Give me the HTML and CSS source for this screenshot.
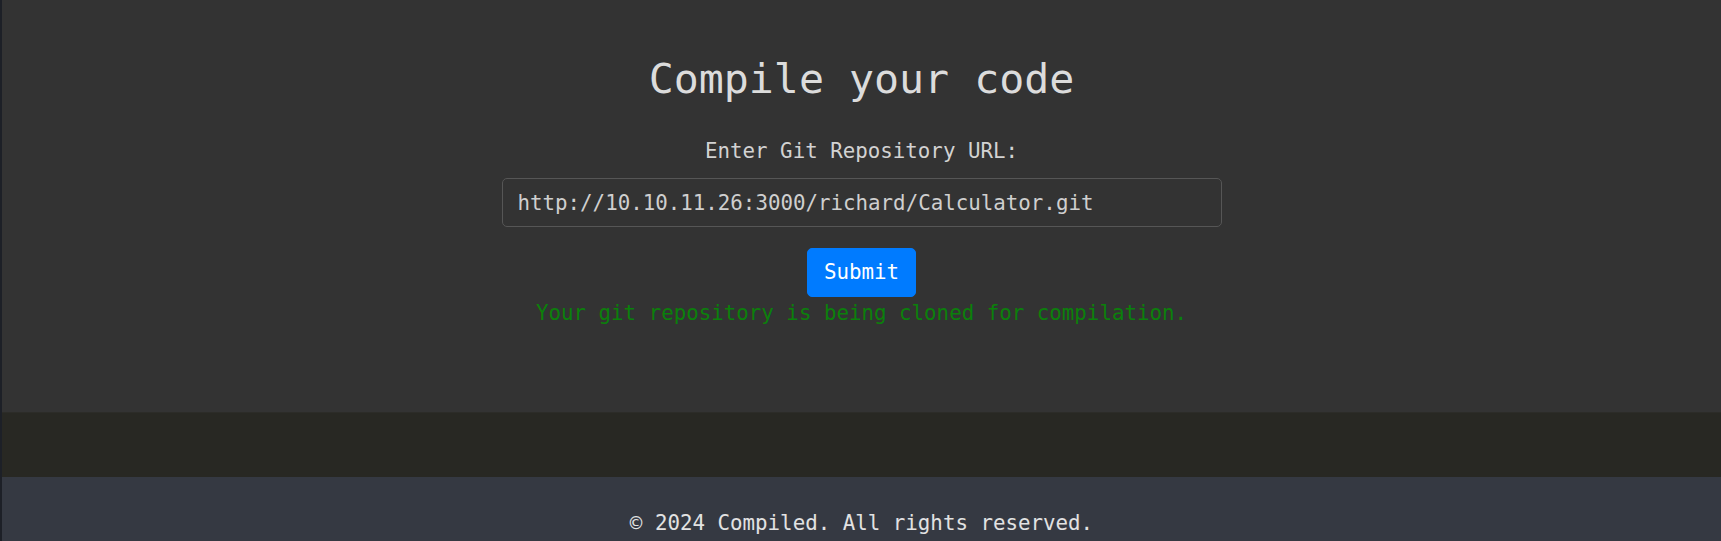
FILE: index.html
```html
<!DOCTYPE html>
<html lang="en">
<head>
<meta charset="utf-8">
<title>Compile your code</title>
<link rel="stylesheet" href="styles.css">
</head>
<body>
<main class="page">
  <h1 class="title">Compile your code</h1>
  <form class="compile-form">
    <label class="label" for="repo">Enter Git Repository URL:</label>
    <input class="repo-input" id="repo" type="text" value="http://10.10.11.26:3000/richard/Calculator.git">
    <button class="submit" type="button">Submit</button>
  </form>
  <p class="status">Your git repository is being cloned for compilation.</p>
</main>
<div class="band"></div>
<footer class="footer">
  <p class="copyright">© 2024 Compiled. All rights reserved.</p>
</footer>
</body>
</html>
```

FILE: styles.css
```css
* { box-sizing: border-box; }

html, body {
  margin: 0;
  padding: 0;
}

body {
  font-family: "DejaVu Sans Mono", monospace;
  font-size: 20.8px;
  line-height: 24px;
  background: #333333;
  border-left: 2px solid #1d2027;
  color: #cccccc;
}

.page {
  height: 412px;
  padding-top: 55px;
  display: flex;
  flex-direction: column;
  align-items: center;
  background: #333333;
}

.title {
  margin: 0;
  font-size: 41.6px;
  line-height: 48px;
  font-weight: normal;
  color: #dcdcdc;
}

.compile-form {
  display: flex;
  flex-direction: column;
  align-items: center;
  margin-top: 36px;
}

.label {
  display: block;
  color: #d2d2d2;
}

.repo-input {
  margin-top: 15px;
  width: 720px;
  height: 49px;
  padding: 0 15px;
  border: 1px solid #565656;
  border-radius: 5px;
  background: #333333;
  color: #cfcfcf;
  font-family: "DejaVu Sans Mono", monospace;
  font-size: 20.8px;
  outline: none;
}

.submit {
  margin-top: 21px;
  height: 49px;
  padding: 0 15.6px;
  border: 1px solid #007bff;
  border-radius: 5px;
  background: #007bff;
  color: #ffffff;
  font-family: "DejaVu Sans Mono", monospace;
  font-size: 20.8px;
  line-height: 31px;
}

.status {
  margin: 4px 0 0;
  color: #0b800b;
}

.band {
  height: 65px;
  background: #282823;
  border-top: 1px solid #2c2c28;
}

.footer {
  height: 64px;
  background: #353942;
  padding-top: 34px;
  text-align: center;
}

.copyright {
  margin: 0;
  color: #e2e2e2;
}
```
